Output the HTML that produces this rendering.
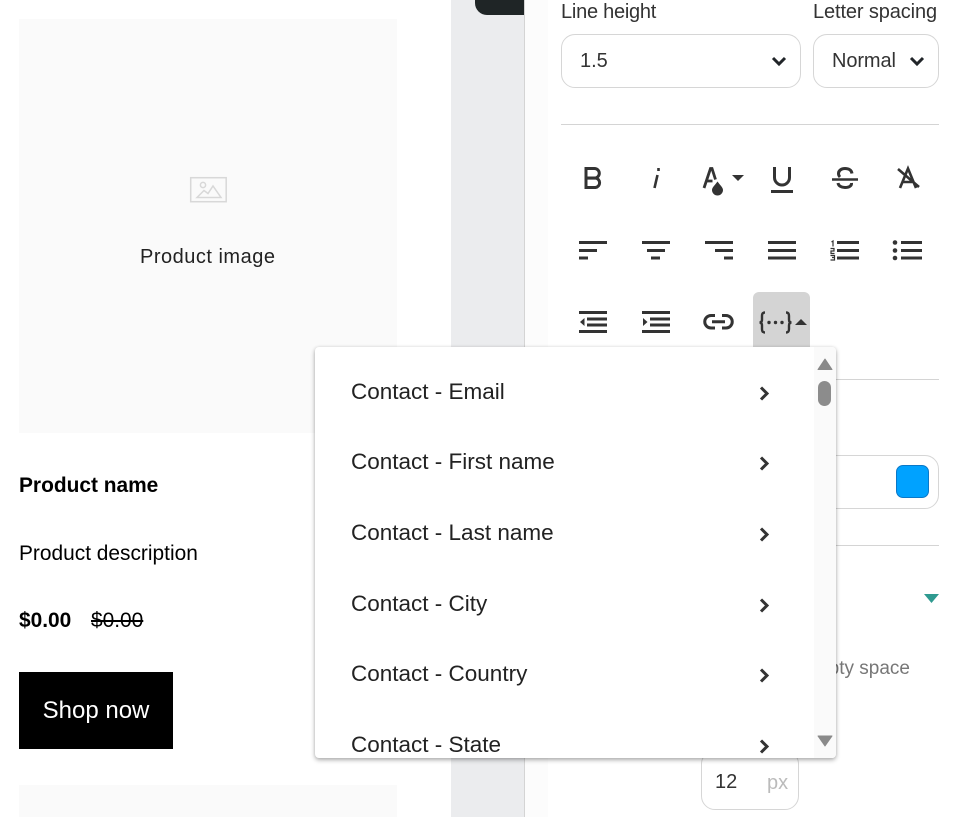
<!DOCTYPE html>
<html><head><meta charset="utf-8">
<style>
html,body{margin:0;padding:0}
body{width:970px;height:817px;position:relative;overflow:hidden;background:#fff;font-family:"Liberation Sans",sans-serif;color:#212529}
.a{position:absolute;white-space:nowrap}
.box{position:absolute;border:1px solid #d6d6d6;border-radius:14px;box-sizing:border-box;background:#fff}
.hr{position:absolute;height:1px;background:#d4d4d4;left:561px;width:378px}
.row{position:absolute;left:351px;font-size:22.5px;line-height:28px;color:#222;white-space:nowrap}
svg{position:absolute;overflow:visible}
</style></head><body>
<div class="a" style="left:19px;top:19px;width:378px;height:414px;background:#fafafa"></div>
<svg style="left:190px;top:177px" width="38" height="26" viewBox="0 0 38 26" fill="none" stroke="#d8d8d8" stroke-width="1.500"><rect x=".7" y=".7" width="35.500" height="24"/><circle cx="13" cy="8" r="2.600"/><path d="M7 20.500l7-7 4 3 5-7.500 8 11.500z"/></svg>
<div class="a" style="left:140px;top:244px;font-size:20px;line-height:26px;color:#222;letter-spacing:.5px">Product image</div>
<div class="a" style="left:19px;top:474px;font-size:20.900px;line-height:24px;font-weight:bold;color:#000">Product name</div>
<div class="a" style="left:19px;top:542px;font-size:20.900px;line-height:24px;color:#000">Product description</div>
<div class="a" style="left:19px;top:609px;font-size:20.900px;line-height:24px;font-weight:bold;color:#000">$0.00</div>
<div class="a" style="left:91px;top:609px;font-size:20.900px;line-height:24px;color:#000;text-decoration:line-through">$0.00</div>
<div class="a" style="left:19px;top:672px;width:154px;height:77px;background:#000;color:#fff;font-size:24px;line-height:78px;text-align:center">Shop now</div>
<div class="a" style="left:19px;top:785px;width:378px;height:32px;background:#fafafa"></div>

<div class="a" style="left:451px;top:0;width:73px;height:817px;background:#ebecee"></div>
<div class="a" style="left:524px;top:0;width:1px;height:817px;background:#d4d4d4"></div>
<div class="a" style="left:525px;top:0;width:23px;height:817px;background:#fcfcfc"></div>
<div class="a" style="left:475px;top:0;width:49px;height:15px;background:#1f2526;border-bottom-left-radius:12px"></div>

<div class="a" style="left:561px;top:0;font-size:20px;line-height:24px;color:#333;letter-spacing:-.25px">Line height</div>
<div class="a" style="left:813px;top:0;font-size:20px;line-height:24px;color:#333;letter-spacing:-.12px">Letter spacing</div>
<div class="box" style="left:561px;top:34px;width:240px;height:54px"></div>
<div class="a" style="left:580px;top:49px;font-size:20px;line-height:24px;color:#333">1.5</div>
<svg style="left:771px;top:54px" width="16" height="12" fill="none" stroke="#212529" stroke-width="3"><path d="M2 4l6 6 6-6"/></svg>
<div class="box" style="left:813px;top:34px;width:126px;height:54px"></div>
<div class="a" style="left:832px;top:49px;font-size:20px;line-height:24px;color:#333;letter-spacing:-.1px">Normal</div>
<svg style="left:909px;top:54px" width="16" height="12" fill="none" stroke="#212529" stroke-width="3"><path d="M2 4l6 6 6-6"/></svg>
<div class="hr" style="top:124px"></div>

<!-- row 1 icons -->
<svg style="left:0;top:0" width="970" height="200" fill="none" stroke="#333" stroke-width="3">
<path d="M586 168.500h8.500a4.800 4.800 0 0 1 0 9.600H586zM586 178h9.500a4.800 4.800 0 0 1 0 9.500H586z"/>
<path d="M658.500 168v3M657.500 175l-3 13" stroke-width="2.600"/>
<path d="M704 188l6.500-19.500h1.500l3.500 11M706.500 181h6" stroke-width="2.800"/>
<path d="M717.500 181.500c2.500 3.500 5.500 6 5.500 8.500a5.500 5.500 0 0 1-11 0c0-2.500 3-5 5.500-8.500z" fill="#333" stroke="none"/>
<path d="M732 175h12l-6 6z" fill="#333" stroke="none"/>
<path d="M774.500 167v10.500a7.500 7.500 0 0 0 15 0V167"/><path d="M771 191.500h22"/>
<path d="M832 179.500h26" stroke-width="2.500"/><path d="M852 173.500c-.500-3.500-3.500-5-7-5s-6.500 2-6.500 5c0 1.500.5 2.500 1.500 3.500M851.500 183c.3 2.500-2 4.500-6.500 4.500-3.500 0-6.500-1.500-7-4.500"/>
<path d="M900 188l8-19.500 8 19.500M903 182h10M898 169l21 18" stroke-width="2.600"/>
</svg>
<!-- row 2 -->
<svg style="left:579px;top:241px" width="340" height="20" fill="#333">
<rect x="0" y="0" width="28" height="3"/><rect x="0" y="8" width="18" height="3"/><rect x="0" y="15.500" width="9" height="3"/>
<rect x="63" y="0" width="28" height="3"/><rect x="68" y="8" width="18" height="3"/><rect x="72" y="15.500" width="9" height="3"/>
<rect x="126" y="0" width="28" height="3"/><rect x="136" y="8" width="18" height="3"/><rect x="145" y="15.500" width="9" height="3"/>
<rect x="189" y="0" width="28" height="3"/><rect x="189" y="8" width="28" height="3"/><rect x="189" y="15.500" width="28" height="3"/>
<path d="M252.500 1l1.500-1v5.500M251.500 7.500h3.500v2.500h-3v2.500h3.500M251.500 14.500h4v2h-2.500 2.500v2.500h-4" fill="none" stroke="#333" stroke-width="1.200"/>
<rect x="258" y="0" width="22" height="3"/><rect x="258" y="8" width="22" height="3"/><rect x="258" y="15.500" width="22" height="3"/>
<circle cx="316" cy="1.500" r="2.300"/><circle cx="316" cy="9.500" r="2.300"/><circle cx="316" cy="17" r="2.300"/>
<rect x="322" y="0" width="21" height="3"/><rect x="322" y="8" width="21" height="3"/><rect x="322" y="15.500" width="21" height="3"/>
</svg>
<!-- row 3 -->
<div class="a" style="left:753px;top:292px;width:57px;height:60px;background:#d4d4d4;border-radius:6px 6px 0 0"></div>
<svg style="left:579px;top:311px" width="240" height="24" fill="#333">
<rect x="0" y="0" width="28" height="3"/><rect x="8" y="6.500" width="20" height="3"/><rect x="8" y="12.500" width="20" height="3"/><rect x="0" y="19" width="28" height="3"/><path d="M5.500 7v8L1 11z"/>
<rect x="63" y="0" width="28" height="3"/><rect x="71" y="6.500" width="20" height="3"/><rect x="71" y="12.500" width="20" height="3"/><rect x="63" y="19" width="28" height="3"/><path d="M64 7v8l4.500-4z"/>
<path d="M136 4.500h-4a6.200 6.200 0 0 0 0 12.500h4M143 4.500h4a6.200 6.200 0 0 1 0 12.500h-4M133 10.800h13" fill="none" stroke="#333" stroke-width="3"/>
<path d="M186 1.500c-2.500 0-3 1.500-3 3.500v3.500c0 2-1 3-2.500 3 1.500 0 2.500 1 2.500 3v3.500c0 2 .5 3.500 3 3.500M207 1.500c2.500 0 3 1.500 3 3.500v3.500c0 2 1 3 2.500 3-1.500 0-2.500 1-2.500 3v3.500c0 2-.5 3.500-3 3.500" fill="none" stroke="#333" stroke-width="2.400"/>
<circle cx="190" cy="11.500" r="1.700"/><circle cx="196.500" cy="11.500" r="1.700"/><circle cx="203" cy="11.500" r="1.700"/>
<path d="M216 14l6-6 6 6z"/>
</svg>
<div class="hr" style="top:379px"></div>

<!-- right panel under dropdown -->
<div class="box" style="left:700px;top:455px;width:239px;height:54px"></div>
<div class="a" style="left:896px;top:465px;width:33px;height:33px;box-sizing:border-box;background:#00a2ff;border:1px solid #0a78c8;border-radius:7px"></div>
<div class="hr" style="top:545px"></div>
<svg style="left:924px;top:594px" width="15" height="10"><path d="M0 0h15l-7.500 9z" fill="#2f9a90"/></svg>
<div class="a" style="left:760px;top:657px;width:150px;text-align:right;font-size:19px;line-height:24px;color:#777">Empty space</div>
<div class="box" style="left:701px;top:750px;width:98px;height:60px"></div>
<div class="a" style="left:715px;top:770px;font-size:20px;line-height:24px;color:#333">12</div>
<div class="a" style="left:767px;top:771px;font-size:20px;line-height:24px;color:#bbb">px</div>

<!-- dropdown -->
<div class="a" style="left:315px;top:347px;width:521px;height:411px;background:#fff;border-radius:4px;box-shadow:0 2px 5px rgba(0,0,0,.32),0 0 3px rgba(0,0,0,.08);overflow:hidden">
<div class="a" style="left:499px;top:0;width:22px;height:411px;background:#fafafa"></div>
<svg style="left:502px;top:11px" width="16" height="12"><path d="M8 1l7 10.500H1z" fill="#8a8a8a" stroke="#8a8a8a" stroke-linejoin="round"/></svg>
<div class="a" style="left:503px;top:34px;width:13px;height:25px;background:#8c8c8c;border-radius:7px"></div>
<svg style="left:502px;top:388px" width="16" height="12"><path d="M1 1h14L8 11z" fill="#8a8a8a" stroke="#8a8a8a" stroke-linejoin="round"/></svg>
</div>
<div class="row" style="top:378px">Contact - Email</div>
<div class="row" style="top:448px">Contact - First name</div>
<div class="row" style="top:519px">Contact - Last name</div>
<div class="row" style="top:590px">Contact - City</div>
<div class="row" style="top:660px">Contact - Country</div>
<div class="row" style="top:731px">Contact - State</div>
<svg style="left:758px;top:385px" width="14" height="370" fill="none" stroke="#333" stroke-width="3">
<path d="M3 2.500l6 6-6 6"/><path d="M3 72.500l6 6-6 6"/><path d="M3 143.500l6 6-6 6"/><path d="M3 214.500l6 6-6 6"/><path d="M3 284.500l6 6-6 6"/><path d="M3 355.500l6 6-6 6"/>
</svg>
</body></html>
